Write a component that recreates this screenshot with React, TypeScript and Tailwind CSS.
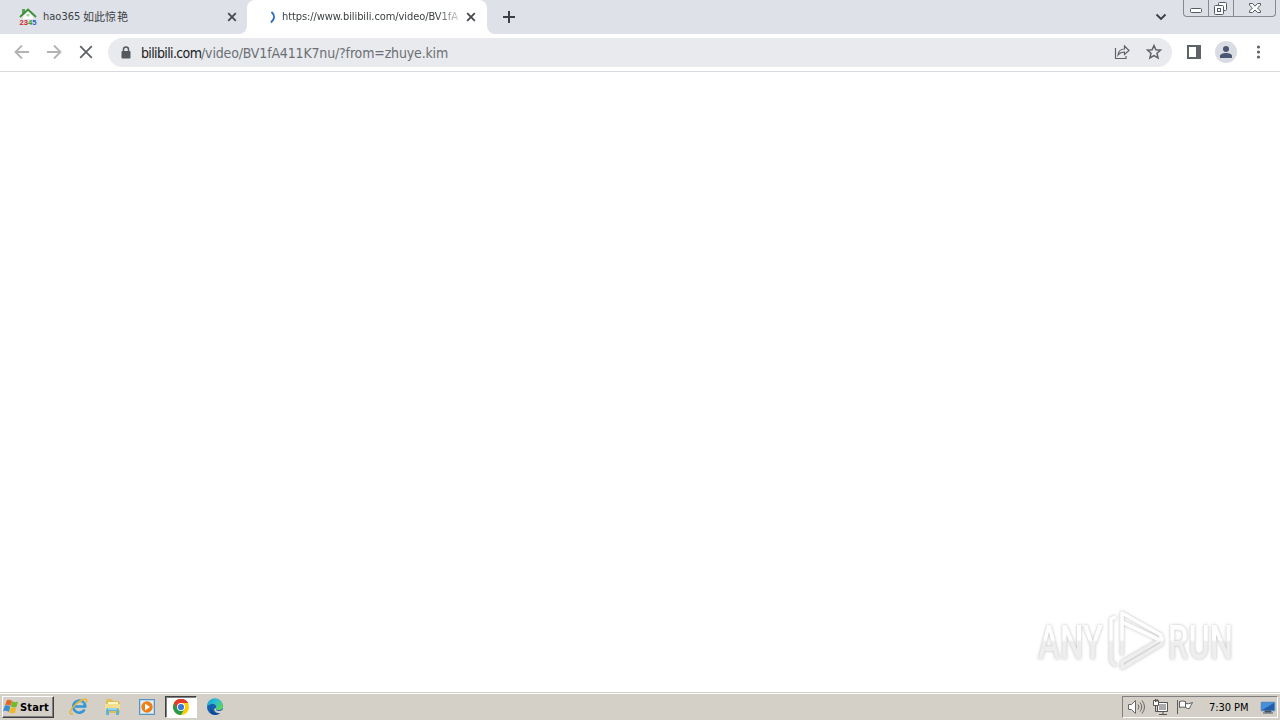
import React from "react";

const Cross = () => (
  <svg width="16" height="16" viewBox="0 0 16 16" fill="none" stroke="#45494d" strokeWidth="1.8"><path d="M4.200 4.200l7.600 7.600M11.800 4.200l-7.600 7.600" /></svg>
);

function TabStrip() {
  return (
    <div className="flex h-[34px] bg-[#dee1e8]">
      <div className="flex h-full w-[247px] shrink-0 items-center pl-[19px]">
        <svg width="18" height="18" viewBox="0 0 18 18">
          <path d="M4 9l5-5 5 5v2H4z" fill="#fff" />
          <path d="M3 1h3v3L3 7z" fill="#57a552" />
          <path d="M1 9L9 1.500 17 9" fill="none" stroke="#3f8f3a" strokeWidth="1.800" />
          <path d="M7.500 6h3v2.500h-3z" fill="#a8d69c" />
          <text x="0.500" y="16.500" fontSize="7.600" fontWeight="700" fontFamily="Liberation Sans" textLength="17"><tspan fill="#d22a2a">2</tspan><tspan fill="#d22a2a">3</tspan><tspan fill="#2a9b2a">4</tspan><tspan fill="#2463c8">5</tspan></text>
        </svg>
        <span className="ml-[6px] flex w-[181px] text-[11px] leading-4 whitespace-nowrap text-[#3c4043]">
          <span className="w-[40px]">hao365</span><span className="pt-px">如此惊</span><span className="ml-px pt-px">艳</span>
        </span>
        <Cross />
      </div>
      <div className="relative flex h-full w-[240px] shrink-0 items-center rounded-t-lg bg-white pl-[19px]">
        <svg className="absolute bottom-0 -left-2" width="8" height="8"><path d="M8 0v8H0a8 8 0 0 0 8-8" fill="#fff" /></svg>
        <svg className="absolute -right-2 bottom-0" width="8" height="8"><path d="M0 0v8h8a8 8 0 0 1-8-8" fill="#fff" /></svg>
        <svg width="16" height="16" viewBox="0 0 16 16"><path d="M5.500 3q5.500 5-.5 10.500" fill="none" stroke="#2869c7" strokeWidth="1.800" /></svg>
        <span className="w-[181px] overflow-hidden pt-px text-[11px] tracking-[-0.080px] whitespace-nowrap text-[#3c4043] [mask-image:linear-gradient(to_right,black_154px,transparent_184px)]">https://www.bilibili.com/video/BV1fA</span>
        <Cross />
      </div>
      <svg className="mt-[9px] ml-[14px]" width="16" height="16" fill="none" stroke="#3c4043" strokeWidth="2"><path d="M8 2v12M2 8h12" /></svg>
      <svg className="mt-[9px] ml-auto" width="16" height="16" fill="none" stroke="#3c4043" strokeWidth="1.900"><path d="M3.500 5.500L8 10l4.500-4.500" /></svg>
      <div className="mr-[4px] ml-[14px] flex h-[17px] w-[93px] rounded-b-[4px] border border-t-0 border-[#858990] bg-[#dce0e6]">
        <div className="w-[25px] border-r border-[#858990]"><svg width="24" height="16"><rect x="6.500" y="8.500" width="11" height="4" rx="1" fill="#fff" stroke="#555b66" /></svg></div>
        <div className="w-[25px] border-r border-[#858990]"><svg width="24" height="16" fill="#fff" stroke="#555b66"><rect x="9.500" y="2.500" width="8" height="8" rx="1" /><rect x="5.500" y="5.500" width="9" height="9" rx="1" /><rect x="8.500" y="8.500" width="3" height="3" /></svg></div>
        <svg width="41" height="16"><path d="M15.500 3.500h3l2.500 2.700 2.500-2.700h3v1.800L23.500 8l3 3v1.500h-3L21 10l-2.500 2.500h-3V11l3-3-3-2.700z" fill="#fff" stroke="#555b66" /></svg>
      </div>
    </div>
  );
}

function Toolbar() {
  return (
    <div className="flex h-[38px] items-center border-b border-[#d8dade] bg-white pb-px pl-3">
      <svg width="20" height="20" fill="none" stroke="#b1b3b5" strokeWidth="1.800"><path d="M17 10H4M10 3.500L3.500 10l6.500 6.500" /></svg>
      <svg className="ml-3" width="20" height="20" fill="none" stroke="#b1b3b5" strokeWidth="1.800"><path d="M3 10h13M10 3.500l6.500 6.500-6.500 6.500" /></svg>
      <svg className="ml-3" width="20" height="20" fill="none" stroke="#5f6266" strokeWidth="1.800"><path d="M4.200 4.200l11.600 11.600M15.800 4.200L4.200 15.800" /></svg>
      <div className="mt-px ml-[12px] flex h-[29px] w-[1064px] items-center rounded-full bg-[#e8eaed] pl-[11px]">
        <svg width="14" height="16"><path d="M4.500 7V4.500a2.500 2.500 0 0 1 5 0V7" fill="none" stroke="#55585c" strokeWidth="1.500" /><rect x="2.500" y="6" width="9" height="7.500" rx="1" fill="#55585c" /></svg>
        <span className="ml-2 flex text-[14px] leading-4 whitespace-nowrap text-[#6c7075]"><span className="w-[60px] tracking-[-0.630px] text-[#202124]">bilibili.com</span><span className="tracking-[-0.160px]">/video/BV1fA411K7nu/?from=zhuye.kim</span></span>
        <svg className="mb-px ml-auto" width="18" height="18" fill="none" stroke="#5f6368" strokeWidth="1.200"><path d="M2.500 5v10.500H13V13M5 12c.5-4 3-6 6.500-6V3l4.500 4.500-4.500 4V9C8.500 9 6.500 10 5 12z" /></svg>
        <svg className="mr-[9px] mb-px ml-[14px]" width="18" height="18" fill="none" stroke="#5f6368" strokeWidth="1.500"><path d="M9 2.500l1.900 4.300 4.600.4-3.500 3.100 1.100 4.600L9 12.500l-4.100 2.400L6 10.300 2.500 7.200l4.600-.4z" /></svg>
      </div>
      <svg className="ml-[14px]" width="16" height="16"><path d="M2 2h12v12H2z" fill="none" stroke="#5f6368" strokeWidth="2" /><path d="M10 2h4v12h-4z" fill="#5f6368" /></svg>
      <svg className="ml-[13px]" width="22" height="22"><circle cx="11" cy="11" r="11" fill="#d9dde3" /><circle cx="11" cy="8" r="3" fill="#4a5873" /><path d="M5 17v-2c0-4 12-4 12 0v2z" fill="#4a5873" /></svg>
      <svg className="ml-[13px]" width="16" height="16" fill="#5f6368"><circle cx="8.500" cy="3" r="1.600" /><circle cx="8.500" cy="8" r="1.600" /><circle cx="8.500" cy="13" r="1.600" /></svg>
    </div>
  );
}

function Watermark() {
  return (
    <svg className="mr-[36px] mb-[14px] drop-shadow-[0_0_1.5px_#bbb]" width="214" height="74" viewBox="1030 604 214 74" fill="none">
      <defs><linearGradient id="wm" gradientUnits="userSpaceOnUse" x1="0" y1="610" x2="0" y2="670"><stop offset="0.500" stopColor="#fff" /><stop offset="0.530" stopColor="#eee" /></linearGradient></defs>
      <g fill="url(#wm)" fontFamily="Roboto" fontSize="49" fontWeight="500">
        <text x="1038" y="659" textLength="65" lengthAdjust="spacingAndGlyphs">ANY</text>
        <text x="1168" y="659" textLength="65" lengthAdjust="spacingAndGlyphs">RUN</text>
      </g>
      <g stroke="url(#wm)" strokeWidth="3.600" strokeLinejoin="round">
        <path d="M1122 655V613l39 22v5" /><path d="M1122 622l38 18-38 22" /><path d="M1116 617l-5 2v42l5 5" /><path d="M1122 661v7l40-24v-7" />
      </g>
    </svg>
  );
}

function Taskbar() {
  return (
    <div className="flex h-[28px] items-center border-t border-[#d4d0c8] bg-[#d4d0c8] pr-[2px] pl-[2px] shadow-[inset_0_1px_0_#fff]">
      <div className="flex h-[22px] w-[52px] items-center border border-t-white border-r-[#404040] border-b-[#404040] border-l-white text-[11px] font-bold text-black shadow-[inset_-1px_-1px_0_#808080]">
        <svg className="shrink-0" width="17" height="16"><path d="M4 1q3-1 5 1L7.500 7Q5 5 2 6z" fill="#e5652b" /><path d="M9 2q3 2 6 .5L13.500 8q-3 1-5.500-.5z" fill="#76b82c" /><path d="M2 6.500q3-1 5.200 1L6 13q-3-2-6-1z" fill="#3a8fd4" /><path d="M7.700 8q3 2 5.600.5l-1.500 5.500q-3 1-5.500-.8z" fill="#f2b722" /></svg>
        <span className="pt-[3px] leading-4 tracking-[0.150px]">Start</span>
      </div>
      <svg className="ml-[15px]" width="20" height="20" viewBox="0 0 20 20" fill="none">
        <path d="M15.500 12.500a6 6 0 1 1 .7-3H6" stroke="#3296d5" strokeWidth="2.600" /><path d="M14.500 7q-2-4-7-1.500" stroke="#78c8ee" />
        <path d="M4 16.500C-1 19 1 12 7 7s13-7 10-1" stroke="#e7b43b" strokeWidth="1.600" />
      </svg>
      <svg className="ml-[14px]" width="20" height="20" viewBox="0 0 20 20">
        <path d="M3 4l1-2h5l1 2h6l1 2v10H3z" fill="#e3bd55" /><path d="M5 5h10v5H5z" fill="#fff7c6" /><path d="M2 7h15v6H2z" fill="#f5df8c" />
        <path d="M3 18v-5q0-2 2-2h9q2 0 2 2v5h-3v-4H6v4z" fill="#62b4d6" /><path d="M5 12h9" stroke="#c8edf8" />
      </svg>
      <svg className="ml-[14px]" width="20" height="20" viewBox="0 0 20 20">
        <rect x="2.500" y="2.500" width="15" height="15" fill="#b5d7ed" stroke="#5794bf" /><path d="M4 4h12v12H4z" fill="#e0eff8" /><circle cx="10" cy="10" r="5.700" fill="#ef7d16" /><path d="M8 6.500l5 3.500-5 3.500z" fill="#fff" />
      </svg>
      <div className="ml-[8px] flex h-[22px] w-[32px] items-center justify-center border border-t-[#404040] border-r-white border-b-white border-l-[#404040] bg-white shadow-[inset_1px_1px_0_#808080]">
        <svg width="16" height="16" viewBox="0 0 16 16"><circle cx="8" cy="8" r="8" fill="#fc0" /><path d="M8 8L1.070 4A8 8 0 0 1 14.930 4L8 4z" fill="#e33b2e" /><path d="M1.070 4A8 8 0 0 0 8 16l3.460-6L8 8z" fill="#279b4b" /><path d="M1.070 4L4.540 10 8 8V4H14.930A8 8 0 0 0 1.070 4" fill="#e33b2e" /><circle cx="8" cy="8" r="4" fill="#fff" /><circle cx="8" cy="8" r="3.100" fill="#3978dd" /></svg>
      </div>
      <svg className="ml-[8px]" width="20" height="20" viewBox="0 0 20 20">
        <defs><linearGradient id="edge" x2="1" y2="0.700"><stop stopColor="#199ad8" /><stop offset="0.500" stopColor="#2cc0d0" /><stop offset="1" stopColor="#62d35b" /></linearGradient></defs>
        <circle cx="10" cy="10" r="8" fill="#1461b0" /><path d="M2 9.500A8 8 0 0 1 18 9q.3 4-4 4-4 0-3-2 1-2-1-3.500-4-2-8 2" fill="url(#edge)" /><path d="M11 11q-1 3 3 3 2 0 3.500-1L19 15l-3 1q-6 1-7-4z" fill="#d4d0c8" /><path d="M6 11q1 7 9 5-4 3-8 1-2-2-1-6" fill="#0b438a" />
      </svg>
      <div className="ml-auto flex h-[22px] w-[156px] items-center border border-t-[#808080] border-r-white border-b-white border-l-[#808080]">
        <svg className="ml-[5px]" width="18" height="18" fill="#fff" stroke="#686868"><path d="M.5 6.500h3l4-4v13l-4-4h-3z" /><path d="M10 6.500q2 2.500 0 5M12 4.500q3.500 4.500 0 9M14 2.500q5 6.500 0 13" fill="none" /></svg>
        <svg className="ml-[6px]" width="18" height="18"><path d="M5.500 4.500h10v9h-10z" fill="#aaa" stroke="#555" /><path d="M6.500 5.500h8v7h-8z" fill="none" stroke="#fff" /><path d="M7 16.500h8M11 14v2M3.500 8v5.500h4" fill="none" stroke="#555" /><path d="M1.500 2.500h5v5h-5z" fill="#fff" stroke="#555" /><path d="M3.500 1v3M5 1v3" stroke="#555" /></svg>
        <svg className="ml-[6px]" width="18" height="18" fill="#fff" stroke="#5d5d5d"><path d="M1.500 2v14M3.500 3.500q3-1 6 0v6q-3-1-6 0zM9.500 5.500q3 1 7-1-2 3-3 6-2 .5-4-1z" /></svg>
        <span className="ml-[15px] w-[51px] pt-[3px] text-[11px] leading-4 tracking-[-0.060px] whitespace-nowrap text-black">7:30 PM</span>
        <svg width="16" height="16"><path d="M1 3h14v9H1z" fill="#235caa" stroke="#8dacca" /><path d="M2 4h12L2 11z" fill="#4391da" /><path d="M5 12h6v1H5zM3 14h10" fill="#333" stroke="#4c5968" /></svg>
      </div>
    </div>
  );
}

export default function App() {
  return (
    <div className="flex h-[720px] w-[1280px] flex-col overflow-hidden bg-white font-['DejaVu_Sans_Condensed','DejaVu_Sans','Noto_Sans_CJK_SC',sans-serif]">
      <TabStrip />
      <Toolbar />
      <main className="flex flex-1 items-end justify-end"><Watermark /></main>
      <Taskbar />
    </div>
  );
}
